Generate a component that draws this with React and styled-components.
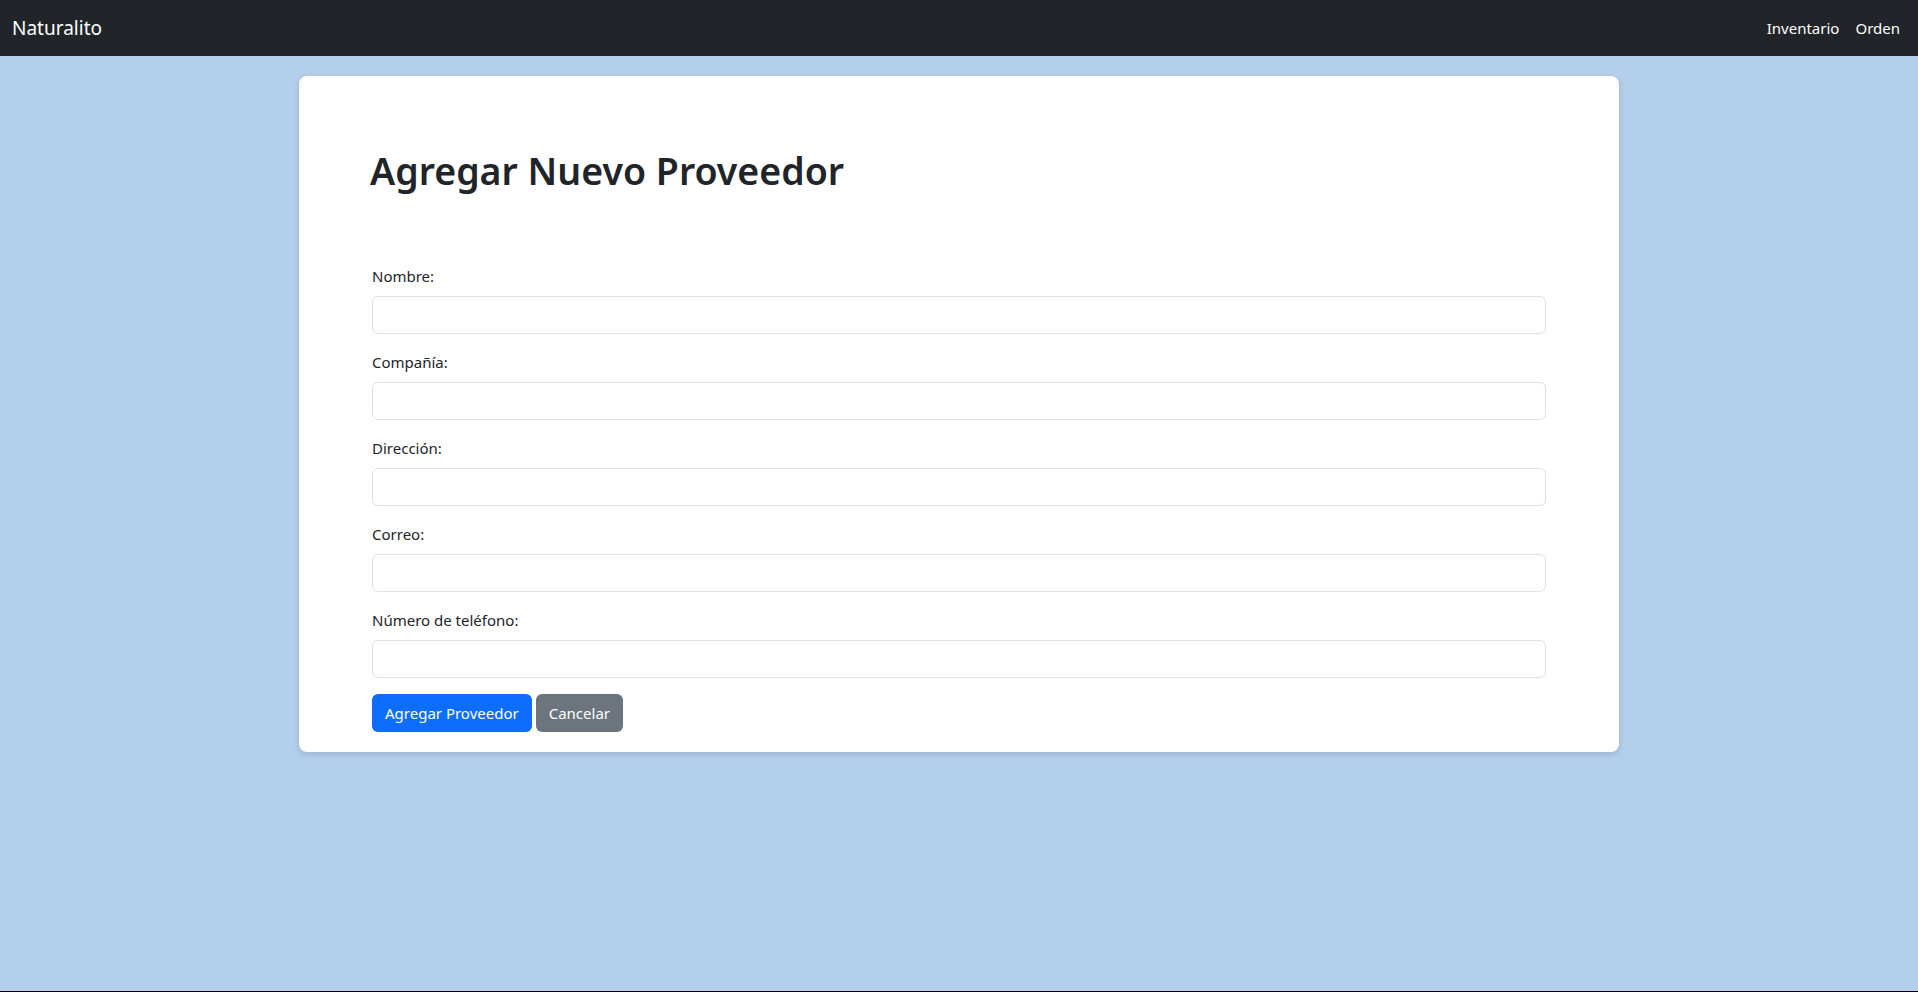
import React from "react";
import styled, { createGlobalStyle } from "styled-components";

const GlobalStyle = createGlobalStyle`
  * { box-sizing: border-box; }
  body {
    margin: 0;
    font-family: "Noto Sans", "Open Sans", "Liberation Sans", sans-serif;
    font-size: 16px;
    line-height: 1.5;
    color: #212529;
    background: #b4cfec;
  }
`;

const fields = [
  { id: "nombre", label: "Nombre:", type: "text" },
  { id: "compania", label: "Compañía:", type: "text" },
  { id: "direccion", label: "Dirección:", type: "text" },
  { id: "correo", label: "Correo:", type: "email" },
  { id: "telefono", label: "Número de teléfono:", type: "tel" },
];

function App() {
  return (
    <Page>
      <GlobalStyle />
      <Navbar>
        <Brand href="#">Naturalito</Brand>
        <NavLinks>
          <NavLink href="#">Inventario</NavLink>
          <NavLink href="#">Orden</NavLink>
        </NavLinks>
      </Navbar>
      <Card>
        <Title>Agregar Nuevo Proveedor</Title>
        <Form onSubmit={(e) => e.preventDefault()}>
          {fields.map((f) => (
            <Group key={f.id}>
              <Label htmlFor={f.id}>{f.label}</Label>
              <Input id={f.id} type={f.type} />
            </Group>
          ))}
          <Actions>
            <Button type="submit" $variant="primary">Agregar Proveedor</Button>
            <Button type="button" $variant="secondary">Cancelar</Button>
          </Actions>
        </Form>
      </Card>
    </Page>
  );
}

const Page = styled.div`
  min-height: 100vh;
  border-bottom: 1px solid #000;
`;

const Navbar = styled.nav`
  height: 56px;
  background: #212529;
  display: flex;
  align-items: center;
  justify-content: space-between;
  padding: 0 12px;
`;

const Brand = styled.a`
  color: #fff;
  font-size: 19px;
  text-decoration: none;
`;

const NavLinks = styled.div`
  display: flex;
  gap: 16px;
  padding-right: 6px;
`;

const NavLink = styled.a`
  color: #fff;
  font-size: 15px;
  text-decoration: none;
`;

const Card = styled.div`
  width: 1320px;
  margin: 20px 0 0 299px;
  background: #fff;
  border-radius: 8px;
  box-shadow: 0 2px 6px rgba(0, 0, 0, 0.15);
  padding: 72px 73px 20px 73px;
`;

const Title = styled.h1`
  margin: 0 0 71px -2px;
  font-size: 37.5px;
  font-weight: 600;
  line-height: 45px;
`;

const Form = styled.form``;

const Group = styled.div`
  margin-bottom: 16px;
`;

const Label = styled.label`
  display: block;
  margin-bottom: 8px;
  font-size: 15px;
  line-height: 24px;
`;

const Input = styled.input`
  display: block;
  width: 100%;
  height: 38px;
  padding: 6px 12px;
  font: inherit;
  border: 1px solid #dee2e6;
  border-radius: 6px;
  background: #fff;
  outline: none;
`;

const Actions = styled.div`
  display: flex;
  gap: 4px;
`;

const Button = styled.button`
  height: 38px;
  padding: 0 13px;
  font-family: inherit;
  font-size: 15px;
  color: #fff;
  border: none;
  border-radius: 6px;
  cursor: pointer;
  background: ${(p) => (p.$variant === "primary" ? "#0d6efd" : "#6c757d")};
`;

export default App;
